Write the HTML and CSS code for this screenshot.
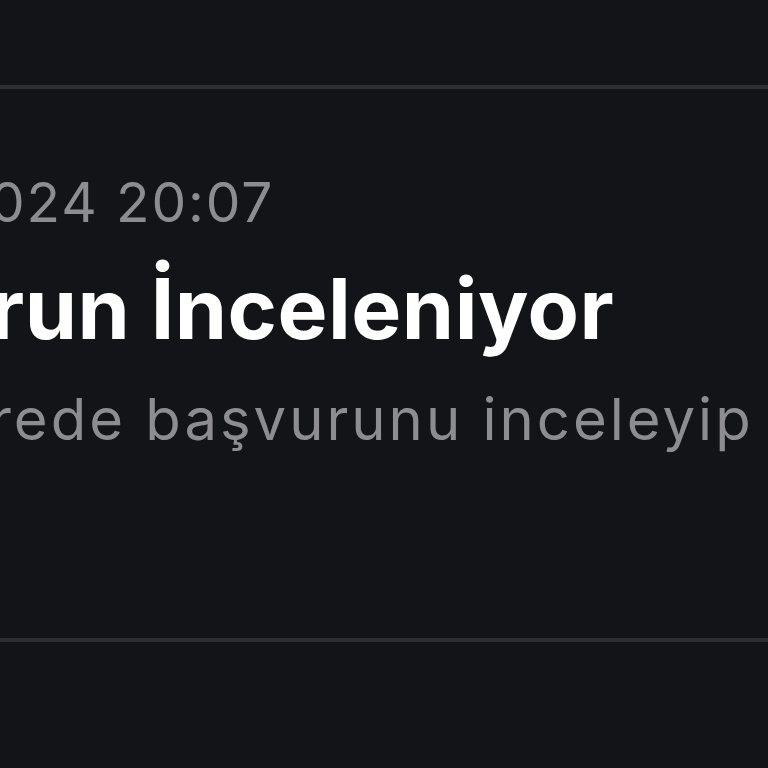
FILE: index.html
```html
<!DOCTYPE html>
<html lang="tr">
<head>
<meta charset="utf-8">
<link rel="stylesheet" href="styles.css">
</head>
<body>
<div class="page">
  <div class="divider divider-top"></div>
  <section class="item">
    <p class="item-date">024 20:07</p>
    <h2 class="item-title">run İnceleniyor</h2>
    <p class="item-text">rede başvurunu inceleyip</p>
  </section>
  <div class="divider"></div>
</div>
</body>
</html>
```
FILE: styles.css
```css
html, body {
  margin: 0;
  padding: 0;
  background: #131418;
}
.page {
  width: 768px;
  height: 768px;
  overflow: hidden;
  display: flex;
  flex-direction: column;
  font-family: Inter, "Noto Sans", sans-serif;
}
.divider {
  height: 4px;
  background: #2d2e32;
  flex: none;
}
.divider-top {
  margin-top: 85px;
}
.item {
  height: 549px;
  padding-top: 81px;
  box-sizing: border-box;
  display: flex;
  flex-direction: column;
  margin-left: -10px;
  white-space: nowrap;
}
.item-date {
  margin: 0;
  font-size: 55px;
  line-height: 64px;
  color: #8c8c91;
  font-weight: 400;
  letter-spacing: 1.9px;
}
.item-title {
  margin: 25px 0 0;
  font-size: 84px;
  line-height: 100px;
  color: #ffffff;
  font-weight: 700;
  letter-spacing: 0.5px;
}
.item-text {
  margin: 27px 0 0;
  font-size: 58px;
  line-height: 66px;
  color: #8c8c91;
  font-weight: 400;
  letter-spacing: 3px;
}
```
